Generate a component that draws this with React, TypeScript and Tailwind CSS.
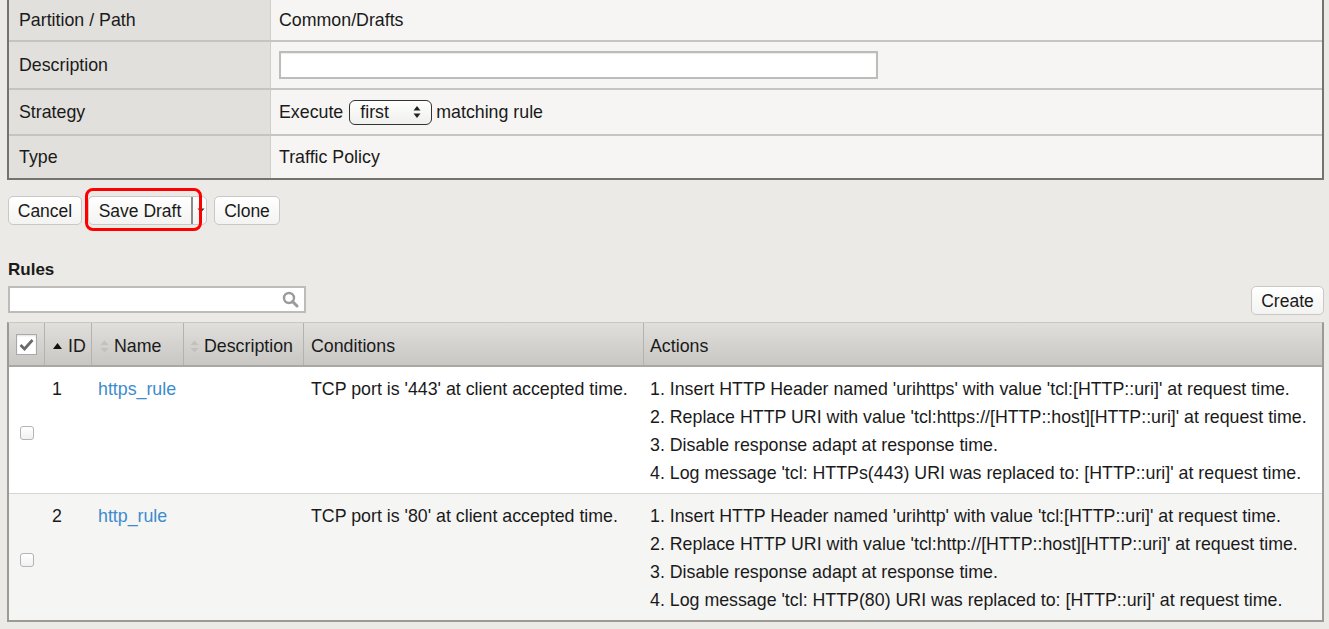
import React from "react";

const font = { fontFamily: '"Liberation Sans", Arial, Helvetica, sans-serif' };

function SortBoth() {
  return (
    <svg width="9" height="13" viewBox="0 0 9 13" className="shrink-0">
      <path d="M4.5 0.5 L8.5 5 L0.5 5 Z" fill="#c2c1be" />
      <path d="M4.5 12.5 L8.5 8 L0.5 8 Z" fill="#c2c1be" />
    </svg>
  );
}

function SortUp() {
  return (
    <svg width="9" height="6" viewBox="0 0 9 6" className="shrink-0">
      <path d="M4.5 0 L9 6 L0 6 Z" fill="#111" />
    </svg>
  );
}

function Btn({ children, className = "" }: { children: React.ReactNode; className?: string }) {
  return (
    <div
      className={
        "h-[29px] flex items-center justify-center rounded-[5px] border border-[#c9c8c4] bg-gradient-to-b from-[#ffffff] to-[#f3f3f1] text-[17.5px] leading-[20px] text-[#1a1a1a] " +
        className
      }
    >
      {children}
    </div>
  );
}

const rules = [
  {
    id: "1",
    name: "https_rule",
    cond: "TCP port is '443' at client accepted time.",
    actions: [
      "1. Insert HTTP Header named 'urihttps' with value 'tcl:[HTTP::uri]' at request time.",
      "2. Replace HTTP URI with value 'tcl:https://[HTTP::host][HTTP::uri]' at request time.",
      "3. Disable response adapt at response time.",
      "4. Log message 'tcl: HTTPs(443) URI was replaced to: [HTTP::uri]' at request time.",
    ],
    bg: "bg-white",
  },
  {
    id: "2",
    name: "http_rule",
    cond: "TCP port is '80' at client accepted time.",
    actions: [
      "1. Insert HTTP Header named 'urihttp' with value 'tcl:[HTTP::uri]' at request time.",
      "2. Replace HTTP URI with value 'tcl:http://[HTTP::host][HTTP::uri]' at request time.",
      "3. Disable response adapt at response time.",
      "4. Log message 'tcl: HTTP(80) URI was replaced to: [HTTP::uri]' at request time.",
    ],
    bg: "bg-[#f5f5f4]",
  },
];

export default function App() {
  return (
    <div className="w-[1329px] h-[629px] bg-[#ebeae6] overflow-hidden text-[17.8px] leading-[22px] text-[#1a1a1a]" style={font}>
      {/* properties table */}
      <div className="ml-[7px] w-[1317px] border-l-2 border-r-2 border-b-2 border-[#737370] flex flex-col">
        {[
          { label: "Partition / Path", h: "h-[40px]", content: <span>Common/Drafts</span> },
          {
            label: "Description",
            h: "h-[46px]",
            content: (
              <div className="w-[599px] h-[28px] bg-white border-2 border-[#bcbcba] shadow-[inset_0_1px_1px_rgba(0,0,0,0.08)]" />
            ),
          },
          {
            label: "Strategy",
            h: "h-[44px]",
            content: (
              <div className="flex items-center">
                <span>Execute</span>
                <div className="ml-[6px] w-[83px] h-[25px] rounded-[6px] border-[1.5px] border-[#333] bg-gradient-to-b from-[#ffffff] to-[#efefed] flex items-center pl-[10px] pr-[10px] justify-between">
                  <span>first</span>
                  <svg width="8" height="14" viewBox="0 0 8 14">
                    <path d="M4 1 L7.5 5.5 L0.5 5.5 Z" fill="#222" />
                    <path d="M4 13 L7.5 8.5 L0.5 8.5 Z" fill="#222" />
                  </svg>
                </div>
                <span className="ml-[4px]">matching rule</span>
              </div>
            ),
          },
          { label: "Type", h: "h-[42px]", content: <span>Traffic Policy</span> },
        ].map((r, i) => (
          <div key={r.label} className={"flex " + (i > 0 ? "border-t-2 border-[#c5c4c1]" : "")}>
            <div className={"w-[262px] shrink-0 bg-[#e1e0dc] border-r border-[#cfceca] flex items-center pl-[10px] " + r.h}>
              {r.label}
            </div>
            <div className={"flex-1 bg-[#f6f5f3] flex items-center pl-[8px] " + r.h}>{r.content}</div>
          </div>
        ))}
      </div>

      {/* buttons */}
      <div className="mt-[16px] ml-[8px] flex items-center">
        <Btn className="w-[74px]">Cancel</Btn>
        <div className="relative ml-[6px] flex">
          <Btn className="w-[119px] !justify-start">
            <span className="w-[102px] text-center">Save Draft</span>
            <span className="w-[2px] h-[27px] bg-[#8a8a88]" />
            <svg width="8" height="5" viewBox="0 0 8 5" className="ml-[4px]">
              <path d="M0.5 0.5 L7.5 0.5 L4 4.5 Z" fill="#333" />
            </svg>
          </Btn>
          <div className="absolute left-[-3px] top-[-8px] w-[117px] h-[43px] border-[3px] border-[#ff0000] rounded-[8px] pointer-events-none" />
        </div>
        <Btn className="w-[66px] ml-[7px]">Clone</Btn>
      </div>

      {/* rules label */}
      <div className="mt-[35px] ml-[8px] font-bold text-[17px] leading-[20px]">Rules</div>

      <div className="mt-[6px] ml-[8px] mr-[5px] flex items-start justify-between">
        <div className="w-[298px] h-[27px] bg-white border-2 border-[#bdbcb9] flex items-center justify-end pr-[5px]">
          <svg width="17" height="17" viewBox="0 0 17 17">
            <circle cx="7" cy="7" r="5" fill="none" stroke="#9b9b9b" strokeWidth="2.4" />
            <path d="M10.5 10.5 L15 15" stroke="#9b9b9b" strokeWidth="3" strokeLinecap="round" />
          </svg>
        </div>
        <Btn className="w-[73px]">Create</Btn>
      </div>

      {/* rules table */}
      <div className="mt-[7px] ml-[7px] w-[1317px] border-l-2 border-r-2 border-b-2 border-[#9b9a97] border-t border-t-[#c9c8c5]">
        <div className="grid grid-cols-[36px_47px_92px_120px_340px_1fr] h-[44px] bg-gradient-to-b from-[#e0dfdc] to-[#c8c7c4] border-b-2 border-[#a9a8a5]">
          <div className="flex items-center justify-center border-r border-[#b3b2af]">
            <div className="w-[21px] h-[21px] bg-white border border-[#a9a9a9] shadow-[inset_0_1px_2px_rgba(0,0,0,0.12)] flex items-center justify-center">
              <svg width="15" height="13" viewBox="0 0 15 13">
                <path d="M1.5 7 L5.5 11 L13.5 2" fill="none" stroke="#6a6a6a" strokeWidth="2.8" />
              </svg>
            </div>
          </div>
          <div className="flex items-center pt-[4px] pl-[8px] gap-[6px] border-r border-[#b3b2af]">
            <SortUp />
            <span>ID</span>
          </div>
          <div className="flex items-center pt-[4px] pl-[8px] gap-[5px] border-r border-[#b3b2af]">
            <SortBoth />
            <span>Name</span>
          </div>
          <div className="flex items-center pt-[4px] pl-[6px] gap-[5px] border-r border-[#b3b2af]">
            <SortBoth />
            <span>Description</span>
          </div>
          <div className="flex items-center pt-[4px] pl-[7px] border-r border-[#b3b2af]">Conditions</div>
          <div className="flex items-center pt-[4px] pl-[6px]">Actions</div>
        </div>
        {rules.map((r, i) => (
          <div
            key={r.id}
            className={"grid grid-cols-[36px_47px_92px_120px_340px_1fr] " + r.bg + (i > 0 ? " border-t border-[#d6d5d2]" : "")}
          >
            <div className="flex items-center justify-center pt-[6px]">
              <div className="w-[14px] h-[14px] rounded-[3px] border border-[#b4b4b4] bg-gradient-to-b from-white to-[#f1f1f1]" />
            </div>
            <div className="pt-[8px] pl-[7px] leading-[28px]">{r.id}</div>
            <div className="pt-[8px] pl-[6px] leading-[28px] text-[#3d8bcd]">{r.name}</div>
            <div />
            <div className="pt-[8px] pl-[7px] leading-[28px] whitespace-nowrap">{r.cond}</div>
            <div className="pt-[8px] pb-[6px] pl-[6px] leading-[28px] whitespace-nowrap">
              {r.actions.map((a) => (
                <div key={a}>{a}</div>
              ))}
            </div>
          </div>
        ))}
      </div>
    </div>
  );
}
